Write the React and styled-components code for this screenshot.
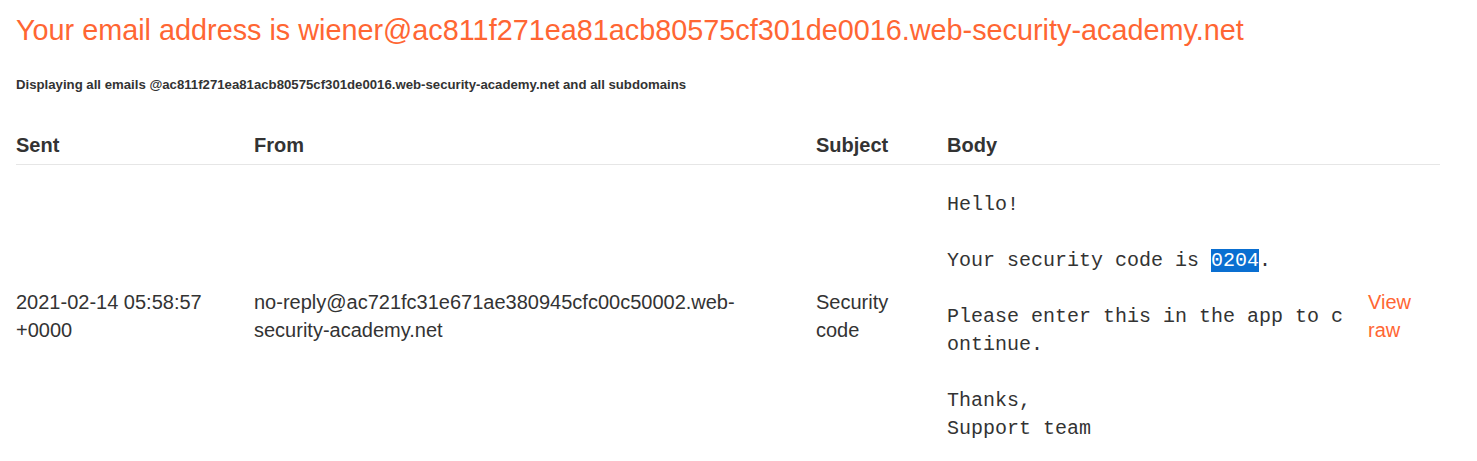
import React from "react";
import styled, { createGlobalStyle } from "styled-components";

const GlobalStyle = createGlobalStyle`
  html, body {
    margin: 0;
    padding: 0;
    background: #fff;
  }
  body {
    font-family: "Liberation Sans", Arial, sans-serif;
    color: #333;
  }
`;

const Page = styled.div`
  padding: 0 37px 0 16px;
`;

const Title = styled.h1`
  margin: 12px 0 0;
  font-size: 28.8px;
  line-height: 36px;
  font-weight: normal;
  color: #ff6633;
`;

const Notice = styled.h4`
  margin: 29px 0 0;
  font-size: 13.2px;
  line-height: 16px;
  font-weight: bold;
  color: #333;
`;

const Table = styled.table`
  margin-top: 38px;
  width: 100%;
  border-collapse: collapse;
  table-layout: fixed;
  font-size: 20px;
  line-height: 28px;
`;

const Col = styled.col`
  width: ${(p) => p.$w}px;
`;

const Head = styled.th`
  text-align: left;
  font-weight: bold;
  padding: 0 16px 5px 0;
  border-bottom: 1px solid #e6e6e6;
`;

const Cell = styled.td`
  vertical-align: middle;
  padding: 24px 16px 0 0;
  word-wrap: break-word;
`;

const Body = styled.pre`
  margin: 0;
  padding-top: 2px;
  font-family: "Liberation Mono", "Courier New", monospace;
  font-size: 20px;
  line-height: 28px;
  white-space: pre-wrap;
  word-break: break-all;
  color: #333;
`;

const Code = styled.span`
  background: #0a6fd1;
  color: #fff;
`;

const RawLink = styled.a`
  color: #ff6633;
  text-decoration: none;
`;

export default function App() {
  return (
    <>
      <GlobalStyle />
      <Page>
        <Title>
          Your email address is
          wiener@ac811f271ea81acb80575cf301de0016.web-security-academy.net
        </Title>
        <Notice>
          Displaying all emails
          @ac811f271ea81acb80575cf301de0016.web-security-academy.net and all
          subdomains
        </Notice>
        <Table>
          <colgroup>
            <Col $w={238} />
            <Col $w={562} />
            <Col $w={131} />
            <Col $w={421} />
            <Col $w={72} />
          </colgroup>
          <thead>
            <tr>
              <Head>Sent</Head>
              <Head>From</Head>
              <Head>Subject</Head>
              <Head>Body</Head>
              <Head></Head>
            </tr>
          </thead>
          <tbody>
            <tr>
              <Cell>2021-02-14 05:58:57 +0000</Cell>
              <Cell>
                no-reply@ac721fc31e671ae380945cfc00c50002.web-security-academy.net
              </Cell>
              <Cell>Security code</Cell>
              <Cell>
                <Body>
                  {"Hello!\n\nYour security code is "}
                  <Code>0204</Code>
                  {".\n\nPlease enter this in the app to continue.\n\nThanks,\nSupport team"}
                </Body>
              </Cell>
              <Cell>
                <RawLink href="#">View raw</RawLink>
              </Cell>
            </tr>
          </tbody>
        </Table>
      </Page>
    </>
  );
}
